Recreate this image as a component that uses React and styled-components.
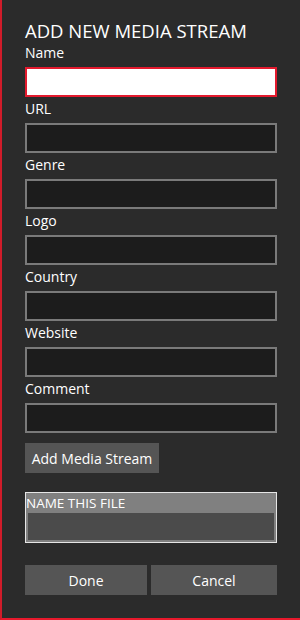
import React from 'react'
import styled, { createGlobalStyle } from 'styled-components'

const Global = createGlobalStyle`
  html, body {
    margin: 0;
    padding: 0;
    background: #2b2b2b;
    overflow: hidden;
  }
  * { box-sizing: border-box; }
`

const Panel = styled.div`
  width: 300px;
  height: 620px;
  background: #2b2b2b;
  border-left: 2px solid #d01c2a;
  border-bottom: 2px solid #e8192c;
  padding: 18px 23px 0 23px;
  font-family: "Open Sans", "Noto Sans", sans-serif;
  color: #ffffff;
  display: flex;
  flex-direction: column;
`

const Title = styled.h1`
  margin: 0;
  font-size: 18.5px;
  font-weight: 400;
  line-height: 26px;
`

const Field = styled.div`
  display: flex;
  flex-direction: column;
`

const Label = styled.label`
  font-size: 14px;
  line-height: 18px;
  height: 23px;
`

const Input = styled.input`
  height: 30px;
  width: 252px;
  margin: 0 0 3px 0;
  background: ${p => (p.$focused ? '#ffffff' : '#1c1c1c')};
  border: 2px solid ${p => (p.$focused ? '#e31a2e' : '#7a7a7a')};
  outline: none;
  color: #fff;
  font: inherit;
`

const Button = styled.button`
  background: #555555;
  border: none;
  color: #ffffff;
  font-family: inherit;
  font-size: 14px;
  height: 30px;
  padding: 0;
  white-space: nowrap;
`

const AddButton = styled(Button)`
  align-self: flex-start;
  margin-top: 7px;
  width: 134px;
`

const FileBox = styled.div`
  margin-top: 19px;
  width: 252px;
  height: 51px;
  border: 1px solid #e6e6e6;
  background: #808080;
  display: flex;
  flex-direction: column;
`

const FileHeader = styled.div`
  height: 20px;
  font-size: 13.5px;
  line-height: 21px;
  color: #ffffff;
`

const FileInput = styled.div`
  flex: 1;
  margin: 0 2px 2px 2px;
  background: #4b4b4b;
`

const Actions = styled.div`
  margin-top: 22px;
  display: grid;
  grid-template-columns: 122px 126px;
  gap: 4px;
  width: 252px;
`

const fields = ['Name', 'URL', 'Genre', 'Logo', 'Country', 'Website', 'Comment']

export default function App() {
  return (
    <>
      <Global />
      <Panel>
        <Title>ADD NEW MEDIA STREAM</Title>
        {fields.map((f, i) => (
          <Field key={f}>
            <Label>{f}</Label>
            <Input $focused={i === 0} />
          </Field>
        ))}
        <AddButton>Add Media Stream</AddButton>
        <FileBox>
          <FileHeader>NAME THIS FILE</FileHeader>
          <FileInput />
        </FileBox>
        <Actions>
          <Button>Done</Button>
          <Button>Cancel</Button>
        </Actions>
      </Panel>
    </>
  )
}
